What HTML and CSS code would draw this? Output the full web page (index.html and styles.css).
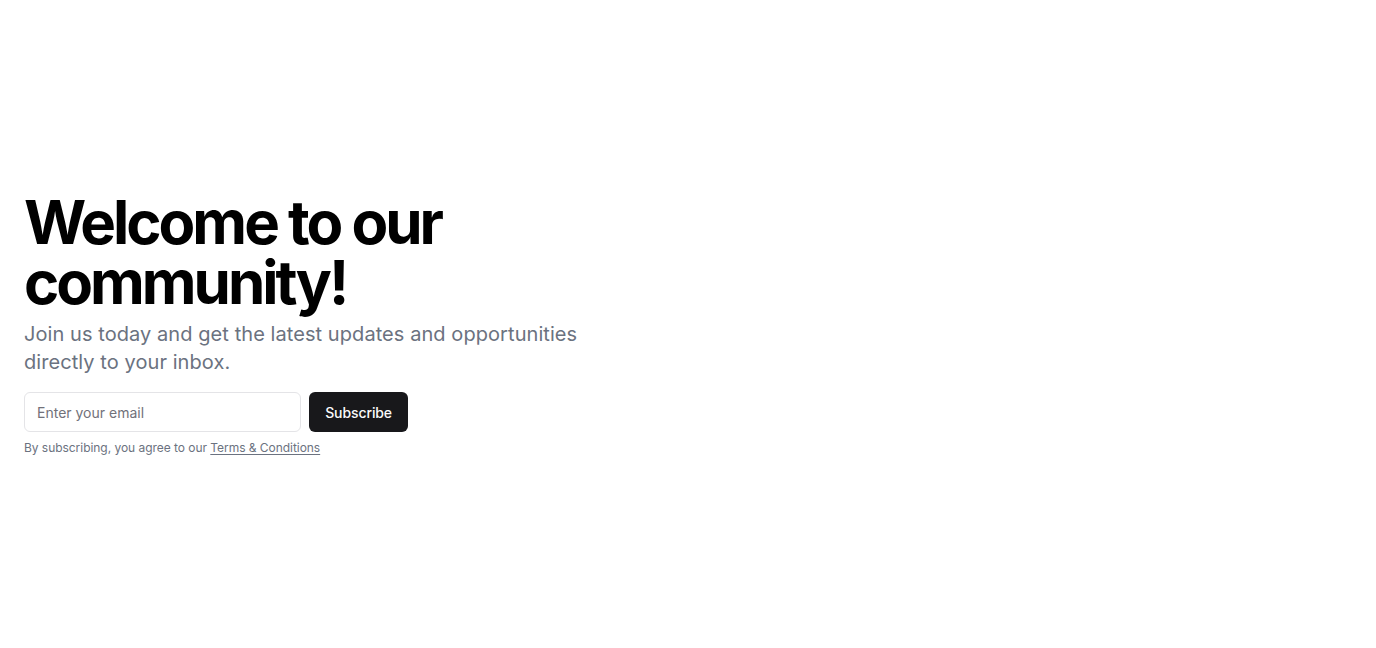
FILE: index.html
```html
<!DOCTYPE html>
<html lang="en">
<head>
<meta charset="utf-8">
<title>Welcome</title>
<link rel="stylesheet" href="styles.css">
</head>
<body>
<section class="hero">
  <div class="container">
    <div class="grid">
      <div class="col">
        <div class="intro">
          <h1 class="title">Welcome to our community!</h1>
          <p class="lead">Join us today and get the latest updates and opportunities directly to your inbox.</p>
        </div>
        <div class="signup">
          <form class="form">
            <input class="input" type="email" placeholder="Enter your email">
            <button class="btn" type="submit">Subscribe</button>
          </form>
          <p class="note">By subscribing, you agree to our <a class="link" href="#">Terms &amp; Conditions</a></p>
        </div>
      </div>
    </div>
  </div>
</section>
</body>
</html>
```

FILE: styles.css
```css
* { box-sizing: border-box; }
html, body { margin: 0; padding: 0; background: #fff; }
body { font-family: Inter, "Noto Sans", sans-serif; color: #000; }
.hero { width: 100%; padding: 192px 0; }
.container { width: 1280px; padding: 0 24px; }
.grid { display: grid; grid-template-columns: 1fr 1fr; gap: 24px; }
.col { display: flex; flex-direction: column; gap: 16px; }
.intro { display: flex; flex-direction: column; gap: 8px; }
.title { margin: 0; font-size: 60px; line-height: 60px; font-weight: 700; letter-spacing: -0.05em; color: #000; }
.lead { margin: 0; max-width: 600px; font-size: 20px; line-height: 28px; color: #6b7280; letter-spacing: 0.07px; }
.signup { width: 100%; max-width: 384px; display: flex; flex-direction: column; gap: 8px; }
.form { display: flex; gap: 8px; margin: 0; }
.input { flex: 1; min-width: 0; height: 40px; border: 1px solid #e4e4e7; border-radius: 6px; padding: 8px 12px; font-family: inherit; font-size: 14px; color: #09090b; background: #fff; outline: none; }
.input::placeholder { color: #71717a; }
.btn { height: 40px; padding: 0 16px; border: 0; border-radius: 6px; background: #18181b; color: #fafafa; font-family: inherit; font-size: 14px; font-weight: 500; letter-spacing: -0.1px; cursor: pointer; }
.note { margin: 0; font-size: 12px; line-height: 16px; color: #6b7280; letter-spacing: -0.04px; }
.link { color: inherit; text-decoration: underline; text-underline-offset: 2px; }
```
